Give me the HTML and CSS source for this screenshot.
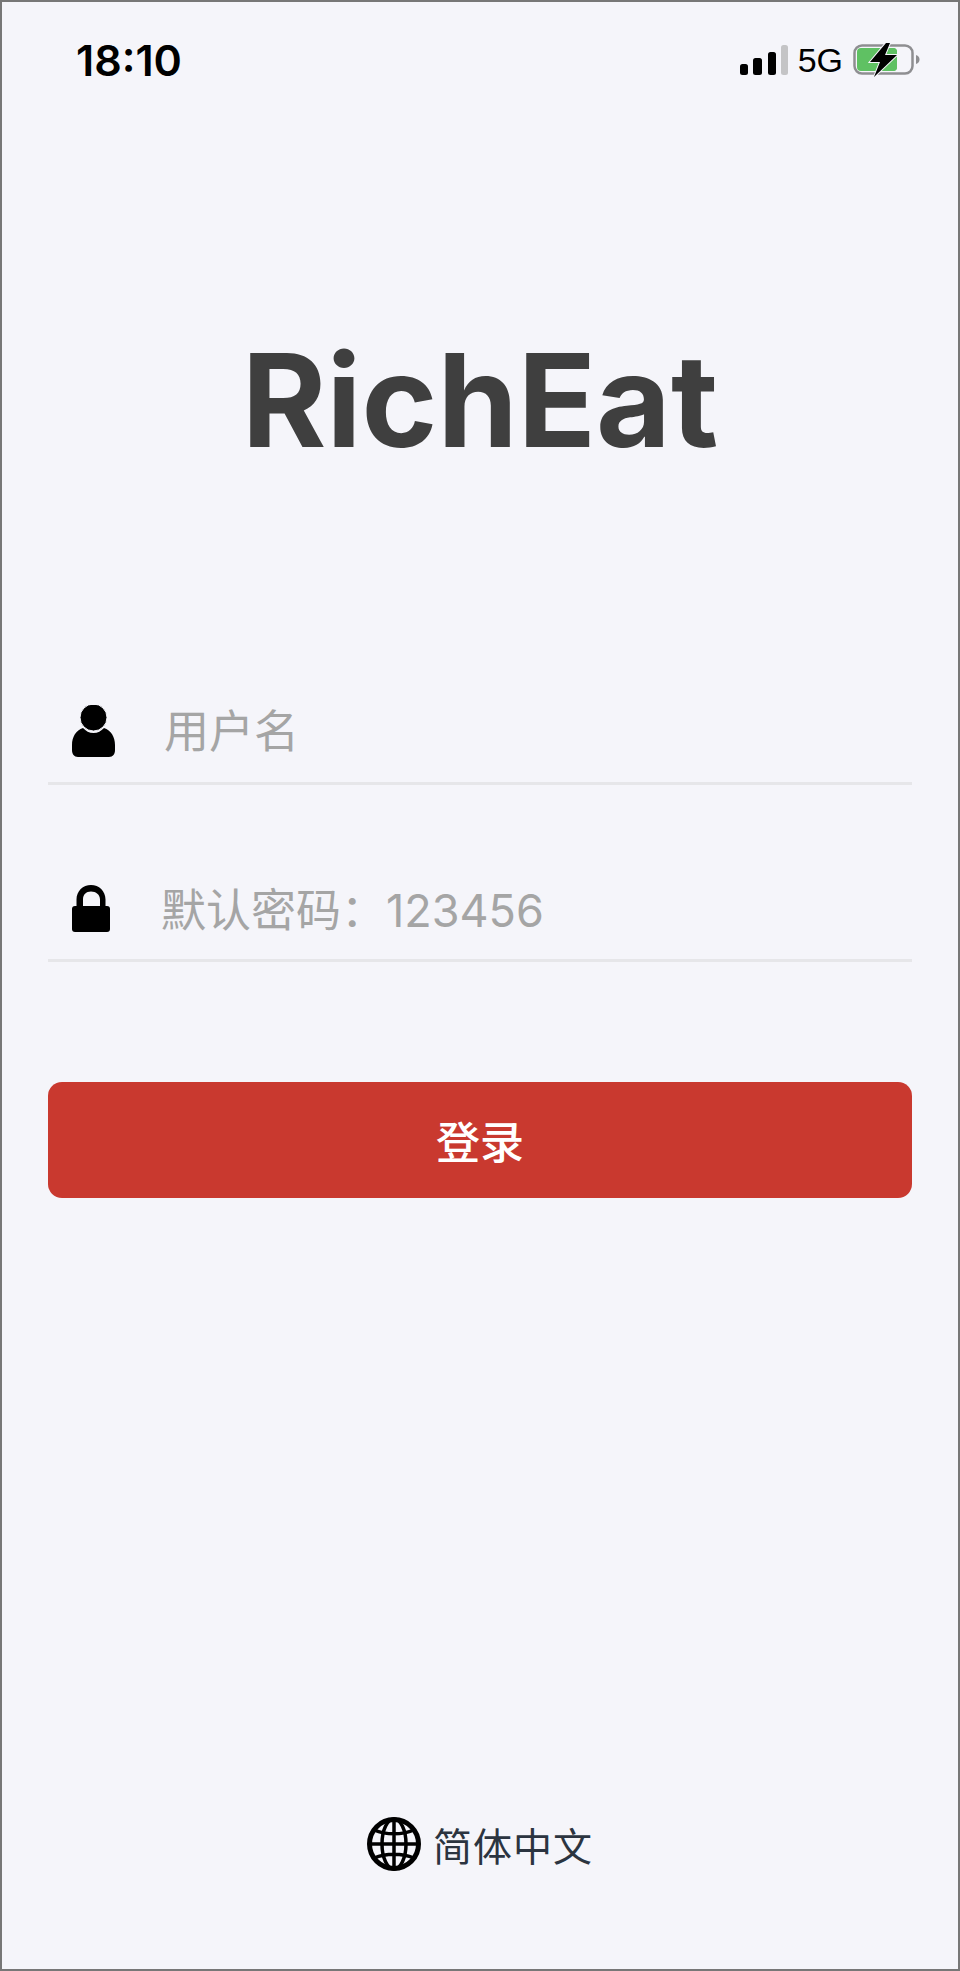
FILE: index.html
```html
<!DOCTYPE html>
<html>
<head>
  <title>RichEat</title>
  <link rel="stylesheet" href="styles.css">
</head>
<body>

  <div class="screen">
    <div class="status-bar">
      <span class="time">18:10</span>
      <div class="status-icons">
        <svg class="signal" width="48" height="31" viewBox="0 0 48 31">
          <rect x="0" y="19" width="8" height="11" rx="2.500" fill="#000"/>
          <rect x="13" y="13" width="9" height="17" rx="2.500" fill="#000"/>
          <rect x="28" y="7" width="8" height="23" rx="2.500" fill="#000"/>
          <rect x="41" y="0" width="7" height="30" rx="2.500" fill="#c4c4c6"/>
        </svg>
        <span class="network">5G</span>
        <svg class="battery" width="67" height="36" viewBox="0 0 67 36">
          <rect x="1.500" y="3.500" width="58" height="28" rx="7.500" fill="none" stroke="#8e8e91" stroke-width="2.500"/>
          <rect x="4" y="6" width="40" height="23" rx="4" fill="#5fc163"/>
          <rect x="30" y="6" width="14" height="23" rx="4" fill="#5fc163"/>
          <path d="M63 13c2.500 .8 3.500 2.500 3.500 4.500s-1 3.700-3.500 4.500z" fill="#8e8e91"/>
          <path d="M33 1 L17 20 H27 L21 35 L44 13 H32 L37 1 Z" fill="#000" stroke="#f5f5fa" stroke-width="2" paint-order="stroke"/>
        </svg>
      </div>
    </div>

    <h1 class="logo">RichEat</h1>

    <form class="login-form">
      <div class="field">
        <svg class="field-icon" width="43" height="52" viewBox="0 0 43 52">
          <path d="M11 23c3 3 6 5 10.500 5S29 26 32 23c7 2 11 9 11 17v5c0 4-2 7-6 7H6c-4 0-6-3-6-7v-5c0-8 4-15 11-17z" fill="#000"/>
          <circle cx="21.500" cy="12.500" r="13.500" fill="#000" stroke="#f5f5fa" stroke-width="1"/>
        </svg>
        <input class="field-input" type="text" placeholder="用户名">
      </div>
      <div class="field field-password">
        <svg class="field-icon lock-icon" width="38" height="47" viewBox="0 0 38 47">
          <path d="M4.500 22V14.500C4.500 6 11 0 19 0s14.500 6 14.500 14.500V22H28V14.500C28 9.500 24 6.500 19 6.500S11 9.500 11 14.500V22z" fill="#000"/>
          <rect x="0" y="21" width="38" height="26" rx="3" fill="#000"/>
        </svg>
        <input class="field-input" type="text" placeholder="默认密码：123456">
      </div>
      <button class="login-btn" type="submit">登录</button>
    </form>

    <div class="language">
      <svg class="globe" width="54" height="54" viewBox="0 0 54 54" fill="none" stroke="#000" stroke-width="3.500">
        <circle cx="27" cy="27" r="24.500" stroke-width="5"/>
        <ellipse cx="27" cy="27" rx="12" ry="25"/>
        <path d="M27 2v50M2 27h50M7 13c12 5 28 5 40 0M7 41c12-5 28-5 40 0"/>
      </svg>
      <span class="language-text">简体中文</span>
    </div>
  </div>

</body>
</html>
```

FILE: styles.css
```css
* {
  box-sizing: border-box;
}

body {
  margin: 0;
  font-family: Inter, "Noto Sans CJK SC", sans-serif;
}

.screen {
  width: 960px;
  height: 1971px;
  display: flex;
  flex-direction: column;
  background: #f5f5fa;
  border: 2px solid #777777;
}

.status-bar {
  height: 116px;
  display: flex;
  justify-content: space-between;
  align-items: center;
  padding: 0 38px 0 74px;
}

.time {
  font-size: 43px;
  font-weight: 600;
  color: #000;
}

.status-icons {
  display: flex;
  align-items: center;
}

.network {
  margin: 0 10px;
  font-family: "Liberation Sans", sans-serif;
  font-size: 34px;
  color: #000;
}

.logo {
  margin: 202px 0 0;
  text-align: center;
  font-size: 129px;
  font-weight: 700;
  line-height: 160px;
  color: #3f3f3f;
}

.login-form {
  margin-top: 208px;
  padding: 0 46px;
  display: flex;
  flex-direction: column;
}

.field {
  height: 97px;
  display: flex;
  align-items: center;
  border-bottom: 3px solid #e6e6e9;
  padding: 0 0 8px 24px;
}

.field-password {
  margin-top: 80px;
  padding-bottom: 3px;
}

.field-icon {
  flex: none;
}

.lock-icon {
  margin-bottom: 5px;
}

.field-input {
  flex: 1;
  min-width: 0;
  margin-left: 47px;
  border: none;
  outline: none;
  background: transparent;
  font-family: Inter, "Noto Sans CJK SC", sans-serif;
  font-size: 45px;
}

.field-password .field-input {
  margin-left: 49px;
}

.field-input::placeholder {
  color: #a5a5a5;
  opacity: 1;
}

.login-btn {
  width: 100%;
  height: 116px;
  margin-top: 120px;
  background: #c9392f;
  color: #ffffff;
  border: none;
  border-radius: 14px;
  font-family: Inter, "Noto Sans CJK SC", sans-serif;
  font-size: 44px;
  font-weight: 500;
  cursor: pointer;
}

.language {
  margin-top: auto;
  margin-bottom: 97px;
  display: flex;
  justify-content: center;
  align-items: center;
  gap: 12px;
}

.language-text {
  font-size: 39px;
  letter-spacing: 1px;
  color: #2b3440;
}
```
